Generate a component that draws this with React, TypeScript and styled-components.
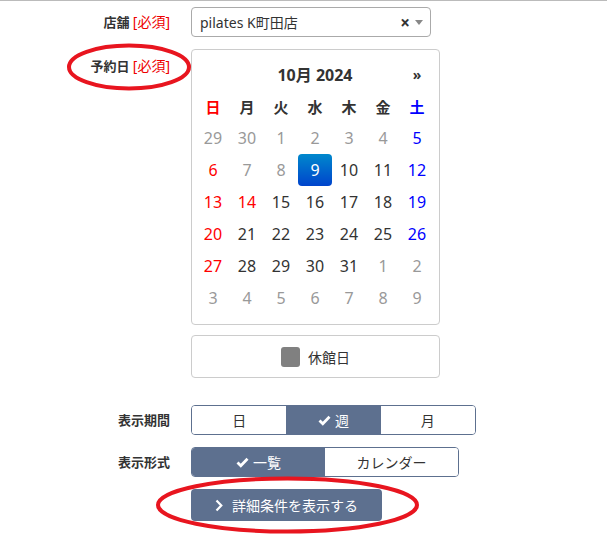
import React from "react";
import styled, { createGlobalStyle } from "styled-components";

const GlobalStyle = createGlobalStyle`
  body {
    margin: 0;
    background: #fff;
    font-family: "Noto Sans", "Noto Sans CJK JP", sans-serif;
    color: #333;
  }
`;

const Page = styled.div`
  position: relative;
  width: 607px;
  height: 536px;
  border-top: 1px solid #bbb;
  box-sizing: border-box;
  padding-top: 6px;
  overflow: hidden;
`;

const Row = styled.div<{ $gap?: number }>`
  display: flex;
  align-items: flex-start;
  margin-top: ${(p) => p.$gap ?? 0}px;
`;

const Label = styled.div<{ $top?: number }>`
  width: 170px;
  margin-right: 21px;
  text-align: right;
  font-size: 13px;
  font-weight: bold;
  line-height: 30px;
  padding-top: ${(p) => p.$top ?? 0}px;
  white-space: nowrap;
`;

const Req = styled.span`
  color: #e00;
  font-weight: normal;
  font-size: 14px;
`;

const Select = styled.div`
  width: 240px;
  height: 30px;
  box-sizing: border-box;
  border: 1px solid #aaa;
  border-radius: 4px;
  display: flex;
  align-items: center;
  padding-left: 8px;
  font-size: 14px;
`;

const SelectText = styled.span`
  flex: 1;
`;

const Clear = styled.span`
  font-weight: bold;
  font-size: 17px;
  color: #333;
  margin-right: 5px;
`;

const Arrow = styled.span`
  width: 0;
  height: 0;
  border-left: 4px solid transparent;
  border-right: 4px solid transparent;
  border-top: 5px solid #888;
  margin-right: 7px;
`;

const Column = styled.div`
  display: flex;
  flex-direction: column;
`;

const Calendar = styled.div`
  width: 249px;
  box-sizing: border-box;
  border: 1px solid #ccc;
  border-radius: 4px;
  padding: 8px 5px 10px 4px;
`;

const Grid = styled.div`
  display: grid;
  grid-template-columns: repeat(7, 34px);
`;

const Head = styled.div<{ $span?: number; $small?: boolean }>`
  grid-column: span ${(p) => p.$span ?? 1};
  height: 32px;
  display: flex;
  align-items: center;
  justify-content: center;
  font-weight: bold;
  font-size: ${(p) => (p.$small ? 14 : 16)}px;
  color: #333;
`;

const Week = styled.div<{ $color: string }>`
  height: 32px;
  display: flex;
  align-items: center;
  justify-content: center;
  font-weight: bold;
  font-size: 15px;
  color: ${(p) => p.$color};
`;

const Day = styled.div<{ $color: string; $active?: boolean }>`
  height: 32px;
  display: flex;
  align-items: center;
  justify-content: center;
  font-size: 16px;
  border-radius: 4px;
  color: ${(p) => (p.$active ? "#fff" : p.$color)};
  background: ${(p) =>
    p.$active ? "linear-gradient(to bottom, #0088cc, #0044cc)" : "transparent"};
`;

const Legend = styled.div`
  margin-top: 10px;
  width: 249px;
  height: 43px;
  box-sizing: border-box;
  border: 1px solid #ccc;
  border-radius: 4px;
  display: flex;
  align-items: center;
  justify-content: center;
  gap: 8px;
  font-size: 14px;
`;

const Swatch = styled.span`
  width: 19px;
  height: 20px;
  border-radius: 3px;
  background: #808080;
`;

const Toggle = styled.div<{ $width: number }>`
  display: flex;
  width: ${(p) => p.$width}px;
  height: 30px;
  box-sizing: border-box;
  border: 1px solid #5d708f;
  border-radius: 4px;
  overflow: hidden;
`;

const Seg = styled.div<{ $on?: boolean }>`
  flex: 1;
  display: flex;
  align-items: center;
  justify-content: center;
  gap: 4px;
  font-size: 14px;
  background: ${(p) => (p.$on ? "#5d708f" : "#fff")};
  color: ${(p) => (p.$on ? "#fff" : "#333")};
`;

const Button = styled.button`
  width: 191px;
  height: 32px;
  border: none;
  border-radius: 4px;
  background: #5d708f;
  color: #fff;
  font-family: inherit;
  font-size: 14px;
  display: flex;
  align-items: center;
  justify-content: center;
  gap: 9px;
  padding: 0;
`;

const Marks = styled.svg`
  position: absolute;
  left: 0;
  top: 0;
  pointer-events: none;
`;

const Check = () => (
  <svg width="13" height="11" viewBox="0 0 13 11">
    <path d="M1.5 5.5 L4.8 8.8 L11.5 1.8" fill="none" stroke="#fff" strokeWidth="2.8" />
  </svg>
);

const Chevron = () => (
  <svg width="8" height="13" viewBox="0 0 8 13">
    <path d="M1.5 1.5 L6.3 6.5 L1.5 11.5" fill="none" stroke="#fff" strokeWidth="2.2" />
  </svg>
);

const RED = "#f00";
const BLUE = "#00f";
const GRAY = "#999";
const DARK = "#333";

const weeks = ["日", "月", "火", "水", "木", "金", "土"];

type D = { n: number; c: string; a?: boolean };

const days: D[] = [
  ...[29, 30, 1, 2, 3, 4].map((n) => ({ n, c: GRAY })),
  { n: 5, c: BLUE },
  { n: 6, c: RED },
  { n: 7, c: GRAY },
  { n: 8, c: GRAY },
  { n: 9, c: DARK, a: true },
  { n: 10, c: DARK },
  { n: 11, c: DARK },
  { n: 12, c: BLUE },
  { n: 13, c: RED },
  { n: 14, c: RED },
  ...[15, 16, 17, 18].map((n) => ({ n, c: DARK })),
  { n: 19, c: BLUE },
  { n: 20, c: RED },
  ...[21, 22, 23, 24, 25].map((n) => ({ n, c: DARK })),
  { n: 26, c: BLUE },
  { n: 27, c: RED },
  ...[28, 29, 30, 31].map((n) => ({ n, c: DARK })),
  ...[1, 2, 3, 4, 5, 6, 7, 8, 9].map((n) => ({ n, c: GRAY })),
];

export default function App() {
  return (
    <Page>
      <GlobalStyle />
      <Row>
        <Label>
          店舗 <Req>[必須]</Req>
        </Label>
        <Select>
          <SelectText>pilates K町田店</SelectText>
          <Clear>×</Clear>
          <Arrow />
        </Select>
      </Row>
      <Row $gap={12}>
        <Label $top={2}>
          予約日 <Req>[必須]</Req>
        </Label>
        <Column>
          <Calendar>
            <Grid>
              <Head />
              <Head $span={5}>10月 2024</Head>
              <Head $small>»</Head>
              {weeks.map((w, i) => (
                <Week key={w} $color={i === 0 ? RED : i === 6 ? BLUE : DARK}>
                  {w}
                </Week>
              ))}
              {days.map((d, i) => (
                <Day key={i} $color={d.c} $active={d.a}>
                  {d.n}
                </Day>
              ))}
            </Grid>
          </Calendar>
          <Legend>
            <Swatch />
            休館日
          </Legend>
        </Column>
      </Row>
      <Row $gap={27}>
        <Label>表示期間</Label>
        <Toggle $width={285}>
          <Seg>日</Seg>
          <Seg $on>
            <Check />週
          </Seg>
          <Seg>月</Seg>
        </Toggle>
      </Row>
      <Row $gap={12}>
        <Label>表示形式</Label>
        <Toggle $width={268}>
          <Seg $on>
            <Check />一覧
          </Seg>
          <Seg>カレンダー</Seg>
        </Toggle>
      </Row>
      <Row $gap={12}>
        <Label />
        <Button>
          <Chevron />
          詳細条件を表示する
        </Button>
      </Row>
      <Marks width="607" height="536">
        <ellipse cx="129" cy="66" rx="60" ry="21.5" fill="none" stroke="#e8151f" strokeWidth="4" />
        <ellipse cx="287.5" cy="504" rx="129.5" ry="26.5" fill="none" stroke="#e8151f" strokeWidth="4" />
      </Marks>
    </Page>
  );
}
